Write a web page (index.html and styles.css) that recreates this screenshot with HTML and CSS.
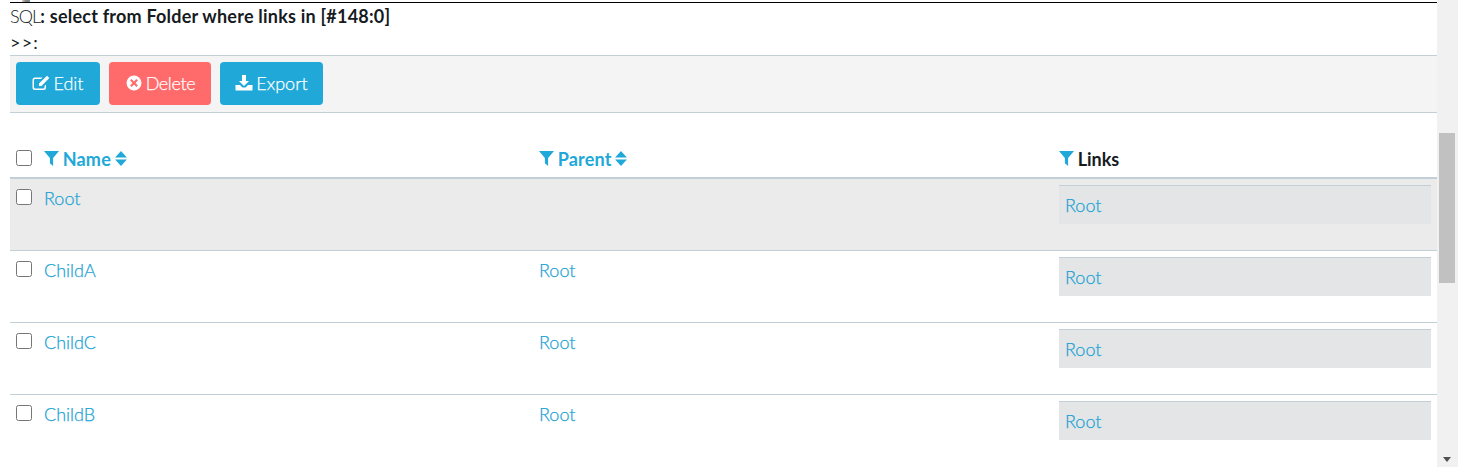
FILE: index.html
```html
<!DOCTYPE html>
<html lang="en">
<head>
    <meta charset="UTF-8">
    <title>Folder list</title>
    <link rel="stylesheet" href="styles.css">
</head>
<body>
    <div class="page">
        <main class="content">
            <div class="clipped-line"></div>
            <hr class="top-rule">
            <p class="sql">SQL<b>: select from Folder where links in [#148:0]</b></p>
            <p class="prompt">&gt;&gt;:</p>

            <!-- Toolbar -->
            <div class="toolbar">
                <a class="btn btn-edit" href="#">
                    <svg class="icon" viewBox="0 0 18 16"><path d="M14 9.500v3a2.500 2.500 0 0 1-2.500 2.500H3a2.500 2.500 0 0 1-2.500-2.500V5A2.500 2.500 0 0 1 3 2.500h7.500L9 4H3.200A1.200 1.200 0 0 0 2 5.200v7.100a1.200 1.200 0 0 0 1.200 1.200h8.100a1.200 1.200 0 0 0 1.200-1.200V11zM15 .8l2.300 2.300-7.800 7.900H7V8.600z" fill="currentColor"/></svg>
                    Edit
                </a>
                <a class="btn btn-delete" href="#">
                    <svg class="icon" viewBox="0 0 16 16"><path fill-rule="evenodd" d="M8 .5a7.500 7.500 0 1 1 0 15 7.500 7.500 0 0 1 0-15zM5.600 4.100 4.100 5.600 6.500 8l-2.400 2.400 1.500 1.500L8 9.500l2.400 2.400 1.500-1.500L9.500 8l2.400-2.400-1.500-1.500L8 6.500z" fill="currentColor"/></svg>
                    Delete
                </a>
                <a class="btn btn-export" href="#">
                    <svg class="icon" viewBox="0 0 17 16"><path d="M6.500 0h4v6h3l-5 5-5-5h3zM0 10h4.500l2.500 2.500h3l2.500-2.500H17v5.500H0z" fill="currentColor"/></svg>
                    Export
                </a>
            </div>

            <!-- Data table -->
            <table class="grid">
                <thead>
                    <tr>
                        <th class="col-check"><input type="checkbox"></th>
                        <th class="col-name"><svg class="funnel" viewBox="0 0 14 14"><path d="M0 0h14L8.500 6.500V14l-3-2.500V6.500z"/></svg> <a href="#">Name</a> <svg class="sort" viewBox="0 0 11 14"><path d="M5.500 0 11 6H0zM0 8h11l-5.500 6z"/></svg></th>
                        <th class="col-parent"><svg class="funnel" viewBox="0 0 14 14"><path d="M0 0h14L8.500 6.500V14l-3-2.500V6.500z"/></svg> <a href="#">Parent</a> <svg class="sort" viewBox="0 0 11 14"><path d="M5.500 0 11 6H0zM0 8h11l-5.500 6z"/></svg></th>
                        <th class="col-links"><svg class="funnel" viewBox="0 0 14 14"><path d="M0 0h14L8.500 6.500V14l-3-2.500V6.500z"/></svg> Links</th>
                    </tr>
                </thead>
                <tbody>
                    <tr class="selected">
                        <td><input type="checkbox"></td>
                        <td><a href="#">Root</a></td>
                        <td></td>
                        <td><div class="link-box"><a href="#">Root</a></div></td>
                    </tr>
                    <tr>
                        <td><input type="checkbox"></td>
                        <td><a href="#">ChildA</a></td>
                        <td><a href="#">Root</a></td>
                        <td><div class="link-box"><a href="#">Root</a></div></td>
                    </tr>
                    <tr>
                        <td><input type="checkbox"></td>
                        <td><a href="#">ChildC</a></td>
                        <td><a href="#">Root</a></td>
                        <td><div class="link-box"><a href="#">Root</a></div></td>
                    </tr>
                    <tr>
                        <td><input type="checkbox"></td>
                        <td><a href="#">ChildB</a></td>
                        <td><a href="#">Root</a></td>
                        <td><div class="link-box"><a href="#">Root</a></div></td>
                    </tr>
                </tbody>
            </table>
        </main>

        <!-- Scrollbar -->
        <div class="scrollbar">
            <div class="thumb"></div>
            <div class="arrow"></div>
        </div>
    </div>
</body>
</html>
```

FILE: styles.css
```css
/* Basic Reset */
* {
    margin: 0;
    padding: 0;
    box-sizing: border-box;
}

html, body {
    height: 467px;
    overflow: hidden;
    background: #fff;
}

body {
    font-family: Lato, sans-serif;
    font-size: 18px;
    font-weight: 300;
    color: #151b1e;
}

a {
    color: #1da3d5;
    text-decoration: none;
}

.page {
    display: flex;
    width: 1458px;
    height: 467px;
}

.content {
    width: 1437px;
    padding-left: 10px;
    overflow: hidden;
}

/* bottom of a line scrolled out of view */
.clipped-line {
    width: 8px;
    height: 2px;
    margin-left: 12px;
    background: linear-gradient(90deg, #ccc, #8a7f70, #6f8fa8);
}

.top-rule {
    border: none;
    border-top: 1px solid #000;
}

.sql, .prompt {
    line-height: 26px;
}

.sql {
    letter-spacing: -.9px;
}

.sql b {
    font-weight: 700;
    letter-spacing: .22px;
}

.prompt {
    font-weight: 400;
    letter-spacing: 1.200px;
}

/* Toolbar */
.toolbar {
    display: flex;
    gap: 9px;
    padding: 6px;
    height: 58px;
    background: #f4f4f4;
    border-top: 1px solid #c2cfd6;
    border-bottom: 1px solid #c2cfd6;
}

.btn {
    display: flex;
    align-items: center;
    justify-content: center;
    gap: 3px;
    height: 43px;
    padding-bottom: 2px;
    background: #20a8d8;
    border-radius: 4px;
    color: #fff;
    font-size: 18px;
    -webkit-text-stroke: .25px #fff;
}

.btn-edit {
    width: 84px;
}

.btn-delete {
    width: 102px;
    background: #ff6b6b;
    letter-spacing: -.35px;
}

.btn-export {
    width: 103px;
}

.icon {
    width: 18px;
    height: 16px;
}

/* Table */
.grid {
    width: 100%;
    margin-top: 27px;
    border-collapse: collapse;
    table-layout: fixed;
}

.col-check { width: 28px; }
.col-name { width: 495px; }
.col-parent { width: 520px; }

th {
    height: 38px;
    padding: 6px;
    text-align: left;
    font-size: 18px;
    font-weight: 700;
    word-spacing: -.7px;
    border-bottom: 2px solid #c2cfd6;
}

th a {
    color: #20a8d8;
    letter-spacing: .2px;
}

td {
    height: 72px;
    padding: 6px;
    line-height: 26px;
    vertical-align: top;
    border-bottom: 1px solid #c2cfd6;
}

td a {
    -webkit-text-stroke: .25px #1da3d5;
}

tr:last-child td {
    border-bottom: none;
}

.selected td {
    background: #ebebeb;
}

input[type="checkbox"] {
    width: 16px;
    height: 16px;
}

.funnel {
    width: 15px;
    height: 15px;
    fill: #20a8d8;
}

.sort {
    width: 12px;
    height: 15px;
    fill: #20a8d8;
}

.link-box {
    height: 39px;
    padding: 6px;
    background: #e4e5e6;
    border-top: 1px solid #c2cfd6;
}

/* Scrollbar */
.scrollbar {
    position: relative;
    width: 21px;
    height: 467px;
    padding: 133px 3px 0 2px;
    background: #f1f1f1;
}

.thumb {
    height: 150px;
    background: #c1c1c1;
}

.arrow {
    position: absolute;
    left: 6px;
    bottom: 5px;
    border-top: 5px solid #505050;
    border-left: 4.500px solid transparent;
    border-right: 4.500px solid transparent;
}
```
